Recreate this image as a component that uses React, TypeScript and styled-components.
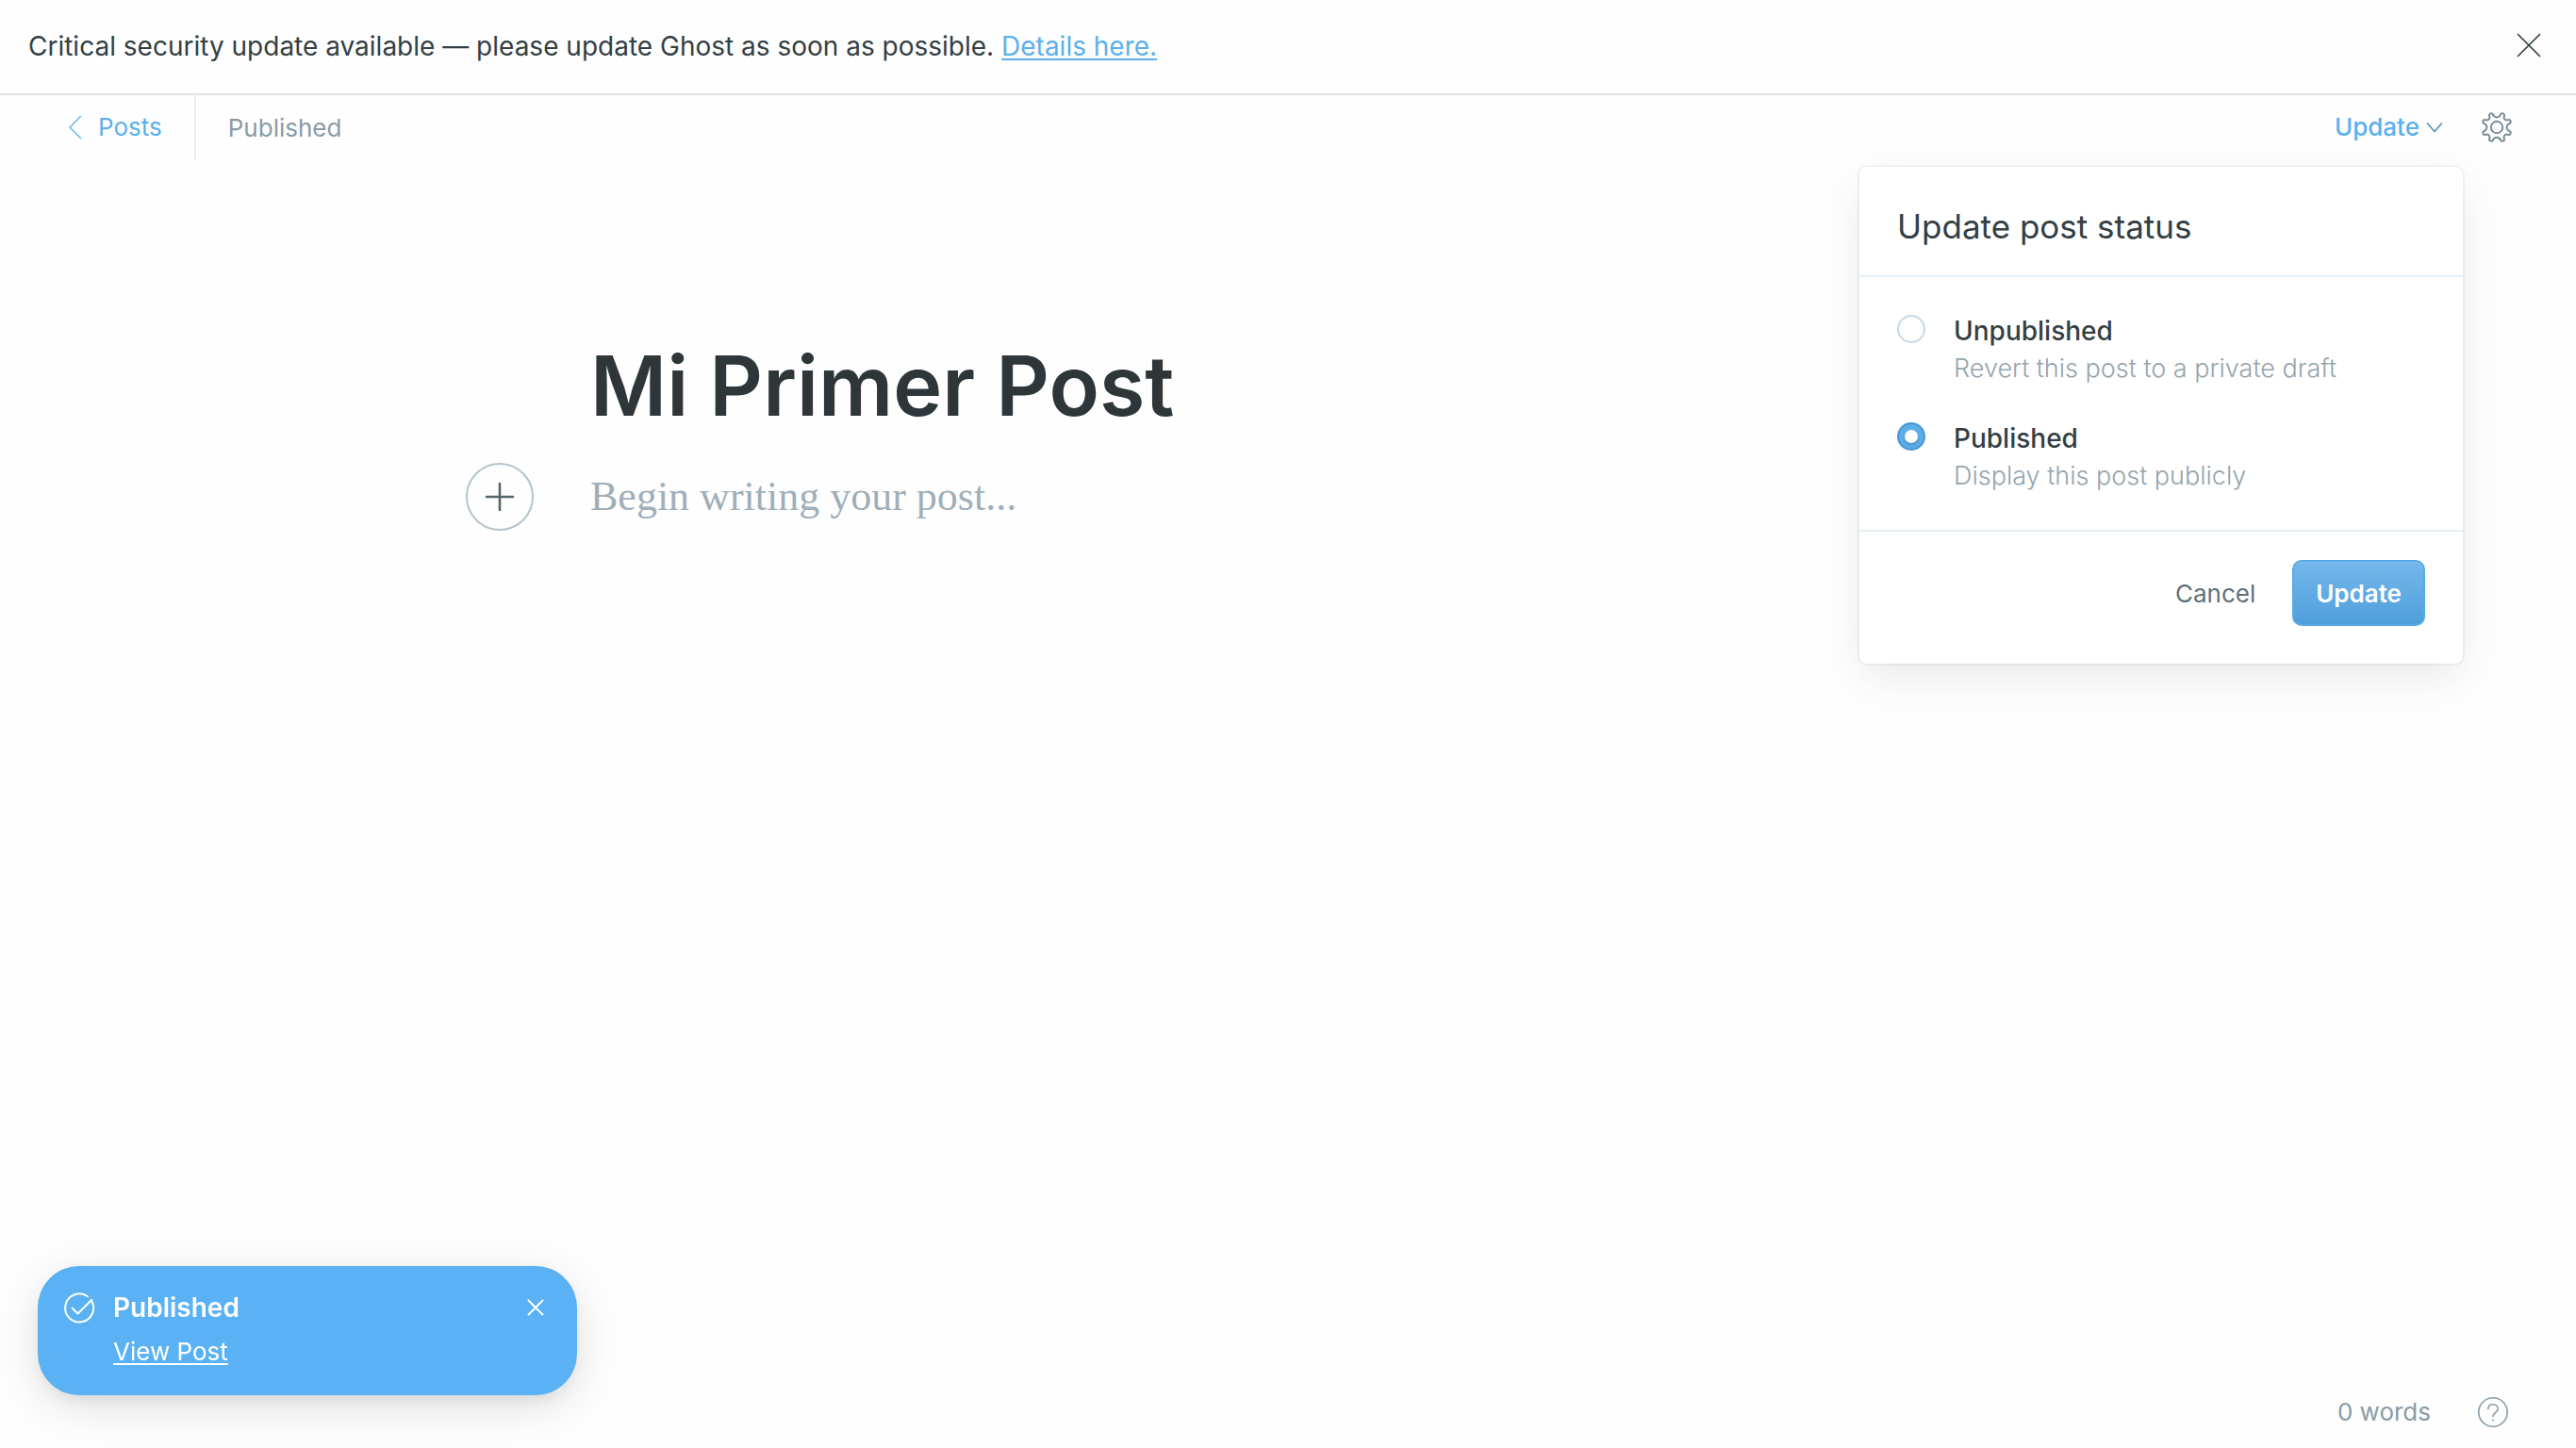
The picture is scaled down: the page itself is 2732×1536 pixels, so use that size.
import React, { useState } from "react";
import styled, { createGlobalStyle, css } from "styled-components";

const sans = `Inter, "Liberation Sans", Arial, sans-serif`;
const serif = `"Liberation Serif", "Times New Roman", serif`;

const color = {
  ink: "#343f44",
  title: "#2f363a",
  slate: "#5f7078",
  grey: "#8a9ba6",
  pale: "#9fafba",
  blue: "#5bb0ec",
  toast: "#5ab1f3",
  line: "#e6eff5",
};

const GlobalStyle = createGlobalStyle`
  * { box-sizing: border-box; }
  html, body, #root { height: 100%; }
  body {
    margin: 0;
    background: #fefefe;
    color: ${color.ink};
    font-family: ${sans};
    font-size: 26px;
    line-height: 40px;
  }
  button, input, textarea { font: inherit; }
`;

const Page = styled.div`
  min-height: 100%;
  display: flex;
  flex-direction: column;
`;

const Banner = styled.aside`
  display: flex;
  align-items: flex-start;
  justify-content: space-between;
  padding: 28px 38px 28px 30px;
  border-bottom: 2px solid #e1e3e3;
  font-size: 28px;
  line-height: 43px;
`;

const TextLink = styled.a`
  color: ${(p) => p.color || color.blue};
  text-decoration: underline;
  text-decoration-thickness: 2px;
  text-underline-offset: 3px;
`;

const IconButton = styled.button<{ $tone?: string }>`
  display: flex;
  align-items: center;
  height: 40px;
  padding: 0;
  border: 0;
  background: none;
  color: ${(p) => p.$tone || color.ink};
  cursor: pointer;
`;

const Icon = styled.svg`
  display: block;
  flex: none;
  overflow: visible;
  fill: none;
  stroke: currentColor;
  stroke-linecap: round;
  stroke-linejoin: round;
`;

const Toolbar = styled.header`
  display: flex;
  justify-content: space-between;
  height: 69px;
  padding: 0 68px 0 72px;
`;

const NavGroup = styled.nav`
  display: flex;
  align-items: center;
  gap: 34px;
`;

const ActionGroup = styled.div`
  position: relative;
  display: flex;
  align-items: center;
  gap: 42px;
  padding-bottom: 2px;
`;

const BackLink = styled.a`
  display: flex;
  align-items: center;
  gap: 16px;
  align-self: stretch;
  padding: 0 34px 2px 0;
  border-right: 2px solid ${color.line};
  color: ${color.blue};
  text-decoration: none;
`;

const Status = styled.span`
  color: ${color.grey};
`;

const MenuTrigger = styled.button`
  display: flex;
  align-items: center;
  gap: 8px;
  padding: 0;
  border: 0;
  background: none;
  color: ${color.blue};
  font-weight: 500;
  cursor: pointer;
`;

const Menu = styled.form`
  position: absolute;
  top: 76px;
  right: 52px;
  width: 640px;
  background: #fff;
  border-radius: 8px;
  box-shadow: 0 0 0 2px rgba(52, 63, 68, 0.05), 0 16px 48px -6px rgba(52, 63, 68, 0.13);
`;

const MenuHeader = styled.header`
  padding: 40px 40px 29px;
  border-bottom: 2px solid ${color.line};
`;

const MenuTitle = styled.h2`
  margin: 0;
  font-size: 35px;
  line-height: 46px;
  font-weight: 400;
`;

const Options = styled.fieldset`
  display: flex;
  flex-direction: column;
  gap: 34px;
  margin: 0;
  padding: 37px 40px;
  border: 0;
  border-bottom: 2px solid ${color.line};
`;

const Option = styled.label`
  display: flex;
  align-items: flex-start;
  gap: 30px;
  cursor: pointer;
`;

const Radio = styled.input`
  appearance: none;
  display: grid;
  place-items: center;
  flex: none;
  width: 30px;
  height: 30px;
  margin: 3px 0 0;
  border: 2px solid #c5d8e6;
  border-radius: 50%;
  background: #fff;

  &:checked {
    border-color: #4596d8;
    background: #5eaee6;
  }
  &:checked::after {
    content: "";
    width: 14px;
    height: 14px;
    border-radius: 50%;
    background: #fff;
    box-shadow: 0 2px 3px rgba(30, 90, 140, 0.4);
  }
`;

const OptionText = styled.span`
  display: flex;
  flex-direction: column;
`;

const OptionName = styled.span`
  font-size: 28px;
  font-weight: 500;
`;

const OptionHint = styled.span`
  color: #95a4ae;
  font-size: 27px;
  font-weight: 300;
`;

const MenuFooter = styled.footer`
  display: flex;
  justify-content: flex-end;
  gap: 14px;
  padding: 30px 40px 40px;
`;

const Button = styled.button<{ $primary?: boolean }>`
  height: 70px;
  padding: 2px 25px 0;
  border: 0;
  border-radius: 10px;
  background: none;
  color: ${color.slate};
  cursor: pointer;

  ${(p) =>
    p.$primary &&
    css`
      border: 2px solid #59a9e4;
      padding: 2px 23px 0;
      background: linear-gradient(#74b8ec, #4f9fdc);
      box-shadow: inset 0 1px 0 rgba(255, 255, 255, 0.12);
      color: #fff;
      font-weight: 600;
    `}
`;

const Editor = styled.main`
  display: flex;
  flex-direction: column;
  gap: 22px;
  flex: 1;
  width: 100%;
  max-width: 1480px;
  margin: 0 auto;
  padding-top: 179px;
`;

const TitleInput = styled.input`
  width: 100%;
  height: 120px;
  padding: 0;
  border: 0;
  outline: 0;
  background: none;
  color: ${color.title};
  font-size: 88px;
  line-height: 120px;
  font-weight: 600;
`;

const Body = styled.div`
  display: flex;
  align-items: center;
  gap: 60px;
  margin-left: -132px;
`;

const AddButton = styled.button`
  display: grid;
  place-items: center;
  flex: none;
  width: 72px;
  height: 72px;
  padding: 0;
  border: 2px solid #b3c3cd;
  border-radius: 50%;
  background: none;
  color: #56656d;
`;

const BodyInput = styled.textarea`
  flex: 1;
  height: 60px;
  padding: 0;
  border: 0;
  outline: 0;
  resize: none;
  background: none;
  font-family: ${serif};
  font-size: 44px;
  line-height: 60px;

  &::placeholder {
    color: ${color.pale};
    opacity: 1;
  }
`;

const Footer = styled.footer`
  display: flex;
  align-items: center;
  justify-content: flex-end;
  gap: 50px;
  padding: 0 72px 18px;
  color: ${color.grey};
`;

const Toast = styled.section`
  position: fixed;
  left: 40px;
  bottom: 56px;
  display: flex;
  align-items: flex-start;
  gap: 20px;
  width: 572px;
  padding: 24px 36px 26px 28px;
  border-radius: 44px;
  background: ${color.toast};
  color: #fff;
  box-shadow: 0 12px 50px rgba(0, 0, 0, 0.12), 0 8px 20px -6px rgba(0, 0, 0, 0.1);
`;

const ToastIcon = styled.span`
  display: flex;
  align-items: center;
  height: 40px;
`;

const ToastText = styled.div`
  display: flex;
  flex-direction: column;
  align-items: flex-start;
  gap: 7px;
  flex: 1;
`;

const ToastTitle = styled.strong`
  font-size: 28px;
  font-weight: 600;
`;

function Cross({ size, weight }: { size: number; weight: number }) {
  return (
    <Icon width={size} height={size} viewBox={`0 0 ${size} ${size}`} strokeWidth={weight}>
      <path d={`M0.5 0.5 L${size - 0.5} ${size - 0.5} M${size - 0.5} 0.5 L0.5 ${size - 0.5}`} />
    </Icon>
  );
}

/* One quarter of the gear's outline: two valleys and two soft teeth. */
const GEAR_QUARTER =
  "M12.4 3.2C13.6 6.1 18.4 6.1 19.6 3.2C20.2 1.7 21 .8 22.6 1.4C24.3 2.1 24.3 3.3 23.6 4.9C22.9 6.6 25.4 9.1 27.1 8.4C28.7 7.7 29.9 7.7 30.6 9.4C31.2 11 30.3 11.8 28.8 12.4";

function Gear() {
  return (
    <Icon width="32" height="32" viewBox="0 0 32 32" strokeWidth="2">
      <circle cx="16" cy="16" r="6.2" />
      {[0, 90, 180, 270].map((angle) => (
        <path key={angle} d={GEAR_QUARTER} transform={`rotate(${angle} 16 16)`} />
      ))}
    </Icon>
  );
}

const OPTIONS = [
  { id: "draft", name: "Unpublished", hint: "Revert this post to a private draft" },
  { id: "published", name: "Published", hint: "Display this post publicly" },
];

export default function App() {
  const [status, setStatus] = useState("published");
  const [title, setTitle] = useState("Mi Primer Post");

  return (
    <Page>
      <GlobalStyle />
      <Banner>
        <span>
          Critical security update available — please update Ghost as soon as possible.{" "}
          <TextLink href="#details">Details here.</TextLink>
        </span>
        <IconButton type="button" aria-label="Dismiss">
          <Cross size={24} weight={1.7} />
        </IconButton>
      </Banner>

      <Toolbar>
        <NavGroup>
          <BackLink href="#posts">
            <Icon width="16" height="26" viewBox="0 0 16 26" strokeWidth="1.3">
              <path d="M13.5 1.5 L2 13 L13.5 24.5" />
            </Icon>
            Posts
          </BackLink>
          <Status>Published</Status>
        </NavGroup>
        <ActionGroup>
          <MenuTrigger type="button" aria-expanded="true">
            Update
            <Icon width="16" height="10" viewBox="0 0 16 10" strokeWidth="1.4">
              <path d="M0.5 1 L8 9.5 L15.5 1" stroke="#4a86b0" />
            </Icon>
          </MenuTrigger>
          <IconButton type="button" aria-label="Settings" $tone="#7a8d98">
            <Gear />
          </IconButton>
          <Menu onSubmit={(e) => e.preventDefault()}>
            <MenuHeader>
              <MenuTitle>Update post status</MenuTitle>
            </MenuHeader>
            <Options aria-label="Post status">
              {OPTIONS.map((o) => (
                <Option key={o.id}>
                  <Radio type="radio" name="status" checked={status === o.id} onChange={() => setStatus(o.id)} />
                  <OptionText>
                    <OptionName>{o.name}</OptionName>
                    <OptionHint>{o.hint}</OptionHint>
                  </OptionText>
                </Option>
              ))}
            </Options>
            <MenuFooter>
              <Button type="button">Cancel</Button>
              <Button type="submit" $primary>Update</Button>
            </MenuFooter>
          </Menu>
        </ActionGroup>
      </Toolbar>

      <Editor>
        <TitleInput aria-label="Post title" value={title} onChange={(e) => setTitle(e.target.value)} />
        <Body>
          <AddButton type="button" aria-label="Add a card">
            <Icon width="32" height="32" viewBox="0 0 32 32" strokeWidth="2.6">
              <path d="M16 2 V30 M2 16 H30" />
            </Icon>
          </AddButton>
          <BodyInput aria-label="Post content" placeholder="Begin writing your post..." />
        </Body>
      </Editor>

      <Footer>
        <span>0 words</span>
        <IconButton type="button" aria-label="Help" $tone={color.grey}>
          <Icon width="32" height="32" viewBox="0 0 32 32" strokeWidth="1.6">
            <circle cx="16" cy="16" r="15.2" />
            <path d="M10.8 12.6C10.8 9.6 13 7.8 16 7.8S21.2 9.8 21.2 12.5C21.2 16.4 16 16.4 16 20.4" />
            <circle cx="16" cy="24.4" r="1" fill="currentColor" stroke="none" />
          </Icon>
        </IconButton>
      </Footer>

      <Toast role="status">
        <ToastIcon>
          <Icon width="32" height="32" viewBox="0 0 32 32" strokeWidth="2">
            <path d="M25 4.3A15 15 0 1 0 29.3 9.2" />
            <path d="M8.5 16.5 L14.5 22.5 L29.3 7.8" />
          </Icon>
        </ToastIcon>
        <ToastText>
          <ToastTitle>Published</ToastTitle>
          <TextLink href="#view" color="#fff">View Post</TextLink>
        </ToastText>
        <ToastIcon>
          <IconButton type="button" aria-label="Close" $tone="#fff">
            <Cross size={16} weight={2} />
          </IconButton>
        </ToastIcon>
      </Toast>
    </Page>
  );
}
